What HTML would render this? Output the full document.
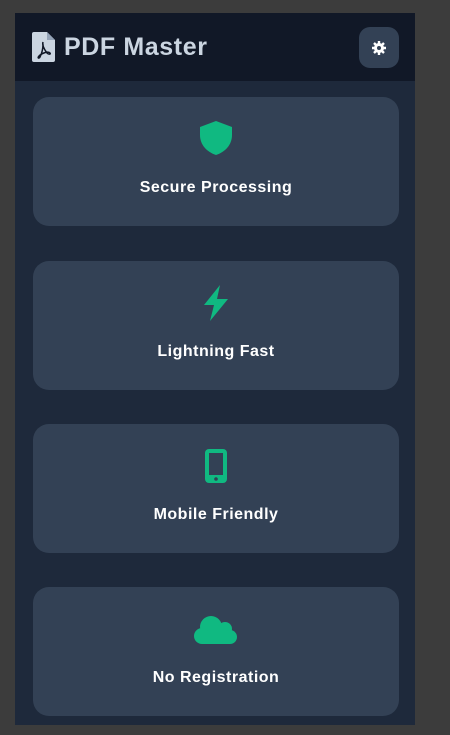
<!DOCTYPE html>
<html><head><style>
body{margin:0;width:450px;height:735px;background:#3c3c3c;font-family:"Liberation Sans",sans-serif;position:relative;overflow:hidden}
.frame{position:absolute;left:15px;top:13px;width:400px;height:712px;background:#1e293b}
.hdr{position:absolute;left:0;top:0;width:400px;height:68px;background:#111827}
.title{position:absolute;left:49px;top:20px;font-size:25px;font-weight:bold;color:#cbd5e1;letter-spacing:0.6px}
.gear{position:absolute;left:344px;top:14px;width:40px;height:41px;border-radius:11px;background:#334155}
.card{position:absolute;left:18px;width:366px;height:129px;border-radius:16px;background:#334155}
.card svg{position:absolute;left:167px;top:24px}
.card .t{position:absolute;left:0;right:0;top:82px;text-align:center;color:#fff;font-weight:bold;font-size:16px;letter-spacing:0.5px}
</style></head><body>
<div class="frame">
<div class="hdr">
<svg style="position:absolute;left:17px;top:19px" width="24" height="30" viewBox="0 0 24 30"><path d="M2 0h13l8 8v20a2 2 0 0 1-2 2H2a2 2 0 0 1-2-2V2a2 2 0 0 1 2-2z" fill="#cbd5e1"/><path d="M15 0v8h8z" fill="#94a3b8"/><path d="M11 10c-1 3 1 7 4 11 2 2 4 1 3 0-2-2-8 0-11 3-2 2 0 3 1 1 2-4 3-9 3-13" stroke="#111827" stroke-width="1.5" fill="none"/></svg>
<div class="title">PDF Master</div>
<div class="gear"><svg style="position:absolute;left:13px;top:14px" width="14" height="14" viewBox="0 0 14 14"><circle cx="7" cy="7" r="5" fill="#fff"/><g stroke="#fff" stroke-width="2.4"><path d="M7 0v14M0 7h14M2 2l10 10M12 2L2 12"/></g><circle cx="7" cy="7" r="2" fill="#334155"/></svg></div>
</div>
<div class="card" style="top:84px"><svg width="32" height="34" viewBox="0 0 32 34"><path d="M16 0L0 6v8c0 10 7 17 16 20 9-3 16-10 16-20V6z" fill="#10b981"/></svg><div class="t">Secure Processing</div></div>
<div class="card" style="top:248px"><svg width="32" height="36" viewBox="0 0 32 36"><path d="M20 0L4 20h10l-4 16 18-22H17z" fill="#10b981"/></svg><div class="t">Lightning Fast</div></div>
<div class="card" style="top:411px"><svg width="32" height="36" viewBox="0 0 32 36" style="top:24px"><rect x="5" y="1" width="22" height="34" rx="4" fill="#10b981"/><rect x="9" y="5" width="14" height="22" fill="#334155"/><circle cx="16" cy="31" r="1.8" fill="#334155"/></svg><div class="t">Mobile Friendly</div></div>
<div class="card" style="top:574px"><svg width="44" height="32" viewBox="0 0 44 32" style="left:161px;top:28px"><circle cx="17" cy="12" r="11" fill="#10b981"/><circle cx="31" cy="14" r="7" fill="#10b981"/><circle cx="8" cy="21" r="8" fill="#10b981"/><circle cx="36" cy="22" r="7" fill="#10b981"/><rect x="8" y="16" width="28" height="13" fill="#10b981"/></svg><div class="t">No Registration</div></div>
</div>
</body></html>
